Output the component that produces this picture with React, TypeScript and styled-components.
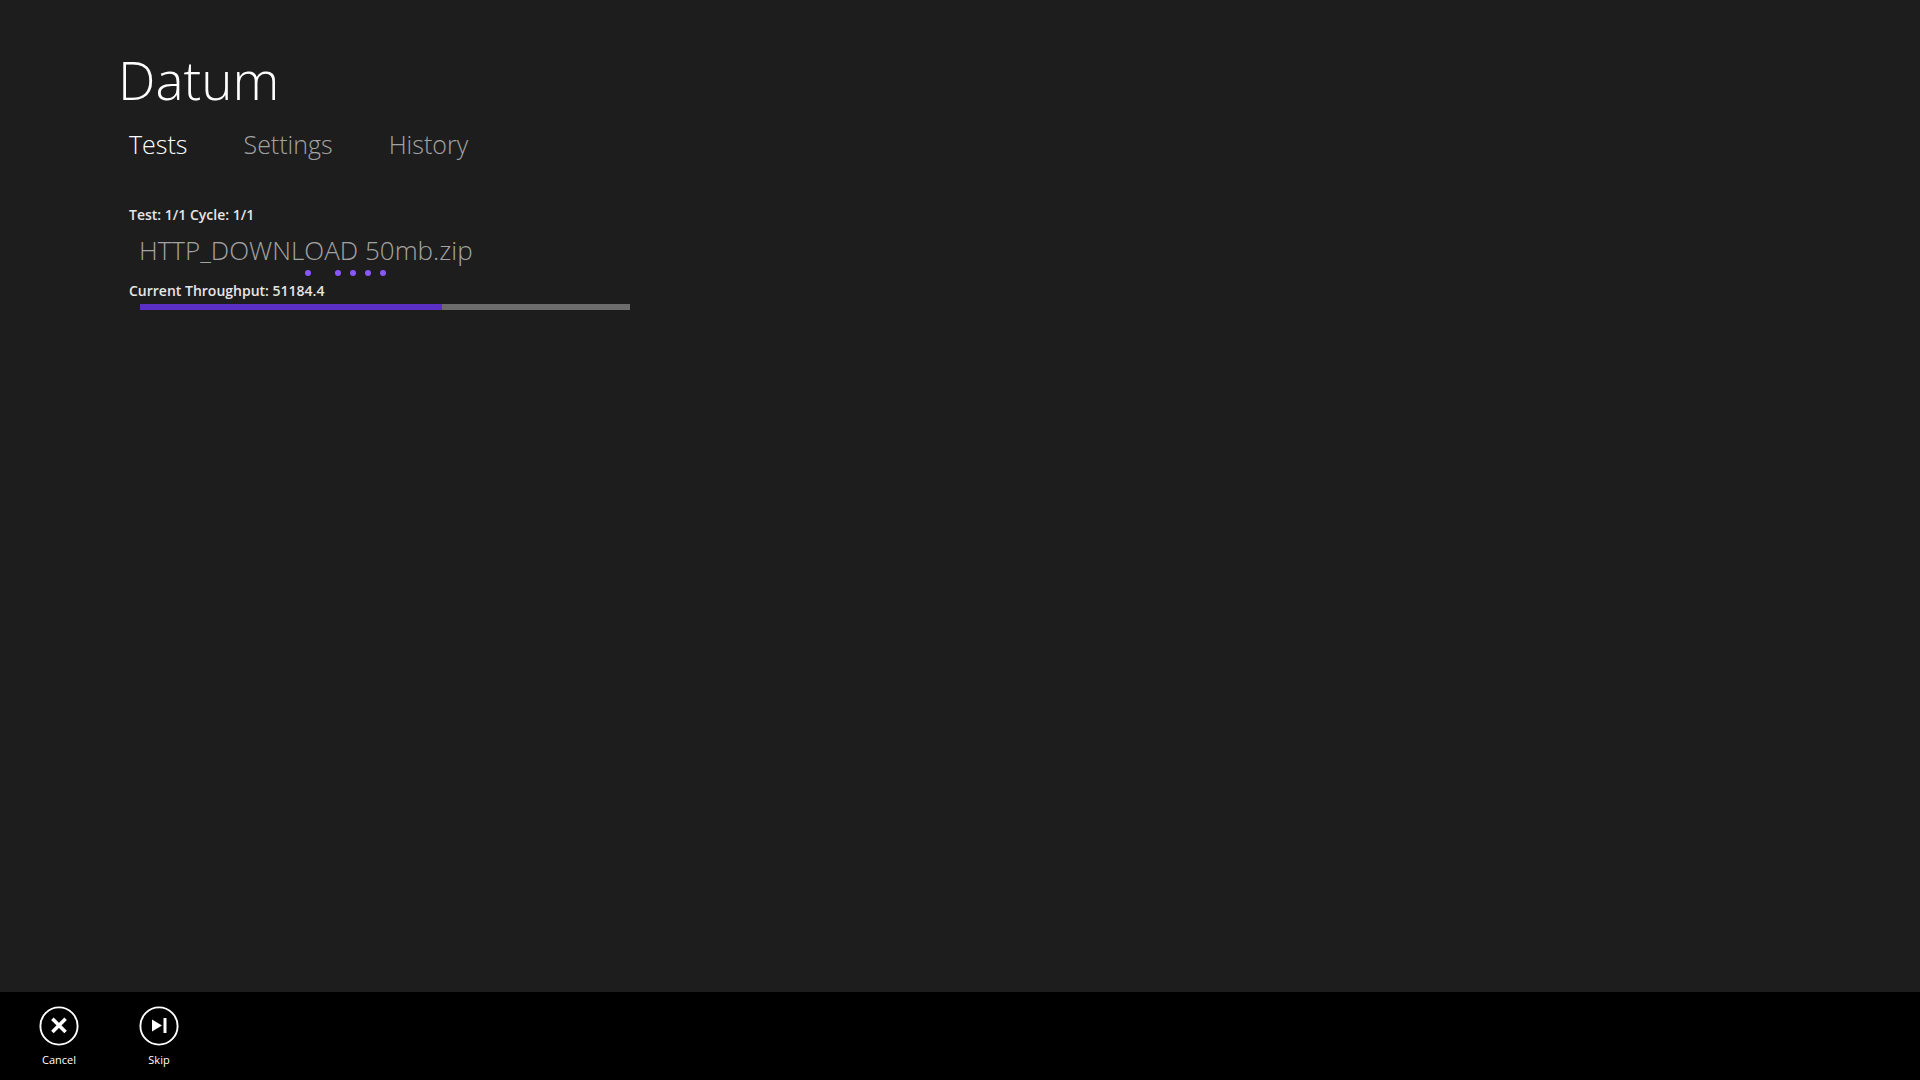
import React from "react";
import styled, { createGlobalStyle } from "styled-components";

const GlobalStyle = createGlobalStyle`
  *, *::before, *::after { box-sizing: border-box; }
  body {
    margin: 0;
    background: #1d1d1d;
    color: #ffffff;
    font-family: "Segoe UI", "Open Sans", "Noto Sans", sans-serif;
  }
`;

const Page = styled.div`
  display: flex;
  flex-direction: column;
  min-height: 100vh;
`;

const Main = styled.main`
  flex: 1;
  padding: 40px 118px;
`;

const Title = styled.h1`
  margin: 0;
  font-size: 53px;
  line-height: 80px;
  font-weight: 300;
`;

const Tabs = styled.nav`
  display: flex;
  gap: 56px;
  padding: 4px 11px;
`;

const Tab = styled.button<{ $active?: boolean }>`
  padding: 0;
  border: 0;
  background: none;
  color: ${(p) => (p.$active ? "#ffffff" : "#a3a3a3")};
  font: inherit;
  font-size: 25px;
  font-weight: 300;
  line-height: 40px;
  cursor: pointer;
`;

const Panel = styled.section`
  display: flex;
  flex-direction: column;
  max-width: 512px;
  margin-top: 37px;
  padding-left: 11px;
`;

const Status = styled.p`
  margin: 0;
  color: #e6e6e6;
  font-size: 14px;
  line-height: 20px;
  font-weight: 600;
`;

const TestName = styled.h2`
  margin: 5px 0 0;
  padding-left: 10px;
  color: #a3a3a3;
  font-size: 26px;
  line-height: 40px;
  font-weight: 300;
`;

const Activity = styled.div`
  display: flex;
  gap: 9px;
  height: 6px;
  margin-bottom: 5px;
  padding-left: 176px;
`;

const Dot = styled.span<{ $hidden?: boolean }>`
  width: 6px;
  height: 6px;
  border-radius: 50%;
  background: ${(p) => (p.$hidden ? "transparent" : "#8a57ff")};
`;

const Meter = styled.progress`
  appearance: none;
  display: block;
  width: calc(100% - 11px);
  height: 6px;
  margin: 3px 0 0 11px;
  border: 0;
  background: #6c6c6c;
  &::-webkit-progress-bar { background: #6c6c6c; }
  &::-webkit-progress-value { background: #5b2ec5; }
`;

const CommandBar = styled.footer`
  display: flex;
  height: 88px;
  padding: 0 9px;
  background: #000000;
`;

const Command = styled.button`
  display: flex;
  flex-direction: column;
  align-items: center;
  gap: 6px;
  width: 100px;
  padding: 14px 0 0;
  border: 0;
  background: none;
  color: #ffffff;
  font: inherit;
  font-size: 11px;
  line-height: 16px;
  cursor: pointer;
`;

const Icon = styled.svg`
  width: 40px;
  height: 40px;
  fill: none;
  stroke: #ffffff;
`;

const dots = [true, false, true, true, true, true];

export default function App() {
  return (
    <Page>
      <GlobalStyle />
      <Main>
        <Title>Datum</Title>
        <Tabs>
          <Tab $active aria-current="page">Tests</Tab>
          <Tab>Settings</Tab>
          <Tab>History</Tab>
        </Tabs>
        <Panel>
          <Status>Test: 1/1 Cycle: 1/1</Status>
          <TestName>HTTP_DOWNLOAD 50mb.zip</TestName>
          <Activity aria-hidden="true">
            {dots.map((visible, i) => (
              <Dot key={i} $hidden={!visible} />
            ))}
          </Activity>
          <Status as="label" htmlFor="progress">Current Throughput: 51184.4</Status>
          <Meter id="progress" max={490} value={302} />
        </Panel>
      </Main>
      <CommandBar>
        <Command>
          <Icon viewBox="0 0 40 40" aria-hidden="true">
            <circle cx="20" cy="20" r="18.6" strokeWidth="1.9" />
            <path d="M13.4 12.8 26.6 26M26.6 12.8 13.4 26" strokeWidth="3.6" />
          </Icon>
          Cancel
        </Command>
        <Command>
          <Icon viewBox="0 0 40 40" aria-hidden="true">
            <circle cx="20" cy="20" r="18.6" strokeWidth="1.9" />
            <path d="M13 13.5 23 19.5 13 25.5Z" fill="#ffffff" stroke="none" />
            <path d="M26 12V27" strokeWidth="3" />
          </Icon>
          Skip
        </Command>
      </CommandBar>
    </Page>
  );
}
